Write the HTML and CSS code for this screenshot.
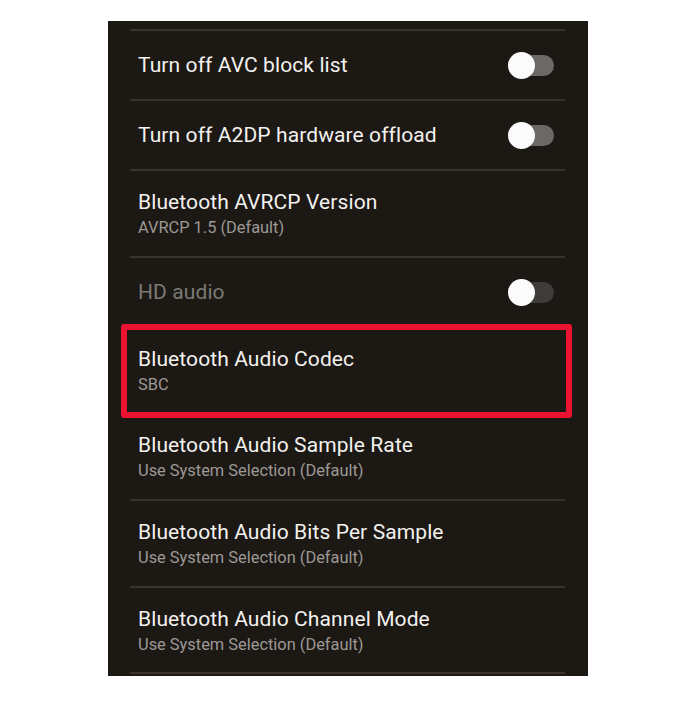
FILE: index.html
```html
<!DOCTYPE html>
<html>
<head>
<meta charset="utf-8">
<link rel="stylesheet" href="styles.css">
</head>
<body>
<div class="panel">
  <div class="row single h70">
    <div class="title">Turn off AVC block list</div>
    <div class="toggle"><span class="knob"></span></div>
  </div>
  <div class="row single h70">
    <div class="title">Turn off A2DP hardware offload</div>
    <div class="toggle"><span class="knob"></span></div>
  </div>
  <div class="row double h87">
    <div class="title">Bluetooth AVRCP Version</div>
    <div class="sub">AVRCP 1.5 (Default)</div>
  </div>
  <div class="row single h70">
    <div class="title disabled">HD audio</div>
    <div class="toggle off-disabled"><span class="knob"></span></div>
  </div>
  <div class="row double h86 highlighted">
    <div class="title">Bluetooth Audio Codec</div>
    <div class="sub">SBC</div>
    <div class="redbox"></div>
  </div>
  <div class="row double h87 nodiv">
    <div class="title">Bluetooth Audio Sample Rate</div>
    <div class="sub">Use System Selection (Default)</div>
  </div>
  <div class="row double h87">
    <div class="title">Bluetooth Audio Bits Per Sample</div>
    <div class="sub">Use System Selection (Default)</div>
  </div>
  <div class="row double h86 last">
    <div class="title">Bluetooth Audio Channel Mode</div>
    <div class="sub">Use System Selection (Default)</div>
  </div>
</div>
</body>
</html>
```

FILE: styles.css
```css
html, body {
  margin: 0;
  padding: 0;
  background: #ffffff;
}
body {
  font-family: Roboto, "Liberation Sans", Arial, sans-serif;
}
.panel {
  margin: 21px 0 0 108px;
  width: 480px;
  height: 655px;
  background: #1c1814;
  padding-top: 8px;
  box-sizing: border-box;
  overflow: hidden;
}
.row {
  position: relative;
  box-sizing: border-box;
  padding: 0 34px 0 30px;
}
.row::before {
  content: "";
  position: absolute;
  top: 0;
  left: 22px;
  right: 23px;
  height: 2px;
  background: #38332e;
}
.row.nodiv::before {
  display: none;
}
.row.last::after {
  content: "";
  position: absolute;
  bottom: 0;
  left: 22px;
  right: 23px;
  height: 2px;
  background: #38332e;
  transform: translateY(2px);
}
.single {
  display: flex;
  align-items: center;
  justify-content: space-between;
}
.double {
  padding-top: 20px;
}
.h70 { height: 70px; }
.h86 { height: 86px; }
.h87 { height: 87px; }
.title {
  color: #f3f1ee;
  font-size: 21px;
  line-height: 26px;
  letter-spacing: 0.1px;
}
.title.disabled {
  color: #7b7874;
}
.single .title {
  margin-top: 2px;
}
.sub {
  color: #9d9995;
  font-size: 16.4px;
  line-height: 26px;
}
.toggle {
  position: relative;
  width: 46px;
  height: 21px;
  border-radius: 11px;
  background: #6b6865;
  margin-top: 2px;
}
.toggle.off-disabled {
  background: #3e3b38;
}
.knob {
  position: absolute;
  left: 0;
  top: -3px;
  width: 27px;
  height: 27px;
  border-radius: 50%;
  background: #fbfbfb;
}
.redbox {
  position: absolute;
  left: 13px;
  right: 16px;
  top: -2px;
  bottom: -6px;
  border: 6px solid #ec1230;
  border-radius: 3px;
  box-sizing: border-box;
}
```
